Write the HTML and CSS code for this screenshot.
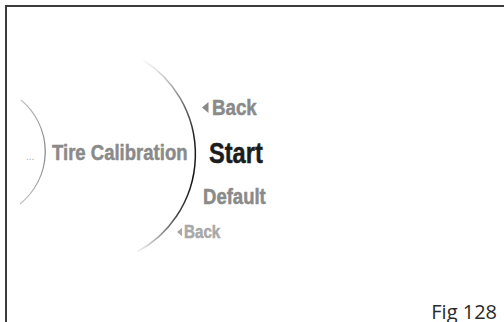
FILE: index.html
```html
<!DOCTYPE html>
<html>
<head>
<meta charset="utf-8">
<link rel="stylesheet" href="styles.css">
</head>
<body>
<div class="frame">
  <svg class="arcs" width="504" height="322" viewBox="0 0 504 322">
    <defs>
      <linearGradient id="bigArc" gradientUnits="userSpaceOnUse" x1="0" y1="58" x2="0" y2="254">
        <stop offset="0" stop-color="#ffffff"/>
        <stop offset="0.1" stop-color="#cccccc"/>
        <stop offset="0.25" stop-color="#666666"/>
        <stop offset="0.4" stop-color="#222222"/>
        <stop offset="0.62" stop-color="#111111"/>
        <stop offset="0.8" stop-color="#444444"/>
        <stop offset="0.92" stop-color="#aaaaaa"/>
        <stop offset="1" stop-color="#ffffff"/>
      </linearGradient>
      <linearGradient id="smallArc" gradientUnits="userSpaceOnUse" x1="0" y1="98" x2="0" y2="206">
        <stop offset="0" stop-color="#c4c4c4"/>
        <stop offset="0.5" stop-color="#777777"/>
        <stop offset="1" stop-color="#c4c4c4"/>
      </linearGradient>
    </defs>
    <path d="M143 60 A111 111 0 0 1 137 252" fill="none" stroke="url(#bigArc)" stroke-width="1.5"/>
    <path d="M21 100 A67 67 0 0 1 20 204" fill="none" stroke="url(#smallArc)" stroke-width="1.1"/>
  </svg>
  <div class="menu">
    <span class="ellipsis">...</span>
    <span class="parent"><span class="narrow">Tire Calibration</span></span>
    <ul class="options">
      <li class="opt prev"><svg class="tri" viewBox="0 0 6 10"><path d="M6 0 L0 5 L6 10Z"/></svg><span class="narrow">Back</span></li>
      <li class="opt current"><span class="narrow">Start</span></li>
      <li class="opt next"><span class="narrow">Default</span></li>
      <li class="opt far"><svg class="tri small" viewBox="0 0 6 10"><path d="M6 0 L0 5 L6 10Z"/></svg><span class="narrow">Back</span></li>
    </ul>
  </div>
  <div class="caption">Fig 128</div>
</div>
</body>
</html>
```
FILE: styles.css
```css
html, body {
  margin: 0;
  padding: 0;
  background: #ffffff;
}
body {
  width: 504px;
  height: 322px;
  overflow: hidden;
}
.frame {
  position: relative;
  box-sizing: border-box;
  margin: 5px 0 0 5px;
  height: 317px;
  border-top: 2px solid #3c3c3c;
  border-left: 2px solid #3c3c3c;
  display: flex;
  flex-direction: column;
  font-family: "Liberation Sans", Arial, sans-serif;
  font-weight: bold;
}
.arcs {
  position: absolute;
  left: -7px;
  top: -7px;
  pointer-events: none;
}
.narrow {
  display: inline-block;
  white-space: nowrap;
  transform: scaleX(0.82);
  transform-origin: 0 50%;
  -webkit-text-stroke: 0.5px currentColor;
}
.menu {
  display: flex;
  align-items: flex-start;
  margin-top: 78px;
}
.ellipsis {
  width: 14px;
  margin-left: 19px;
  margin-top: 62px;
  font-size: 10px;
  line-height: 20px;
  color: #aaaaaa;
  font-weight: normal;
}
.parent {
  width: 125px;
  flex: none;
  margin-left: 12px;
  margin-top: 53px;
  font-size: 22.6px;
  line-height: 30px;
  color: #8a8a8a;
  white-space: nowrap;
}
.options {
  list-style: none;
  margin: 0;
  padding: 0;
  display: flex;
  flex-direction: column;
  align-items: flex-start;
}
.opt {
  display: flex;
  align-items: center;
  white-space: nowrap;
}
.prev {
  margin-left: 25px;
  font-size: 22.8px;
  line-height: 44px;
  color: #8a8a8a;
}
.current {
  margin-left: 32px;
  font-size: 28.8px;
  line-height: 48px;
  color: #1c1c1c;
}
.next {
  margin-left: 26px;
  font-size: 22.6px;
  line-height: 40px;
  color: #8a8a8a;
}
.far {
  margin-left: 0;
  font-size: 18.5px;
  line-height: 30px;
  color: #a8a8a8;
}
.tri {
  width: 6.5px;
  height: 11px;
  fill: currentColor;
  margin-right: 3px;
}
.tri.small {
  width: 5px;
  height: 10px;
  margin-right: 2px;
}
.caption {
  margin-top: auto;
  align-self: flex-end;
  margin-right: 7px;
  font-family: "Open Sans", "Noto Sans", sans-serif;
  font-weight: normal;
  font-size: 20px;
  line-height: 20px;
  color: #2a2a2a;
}
```
